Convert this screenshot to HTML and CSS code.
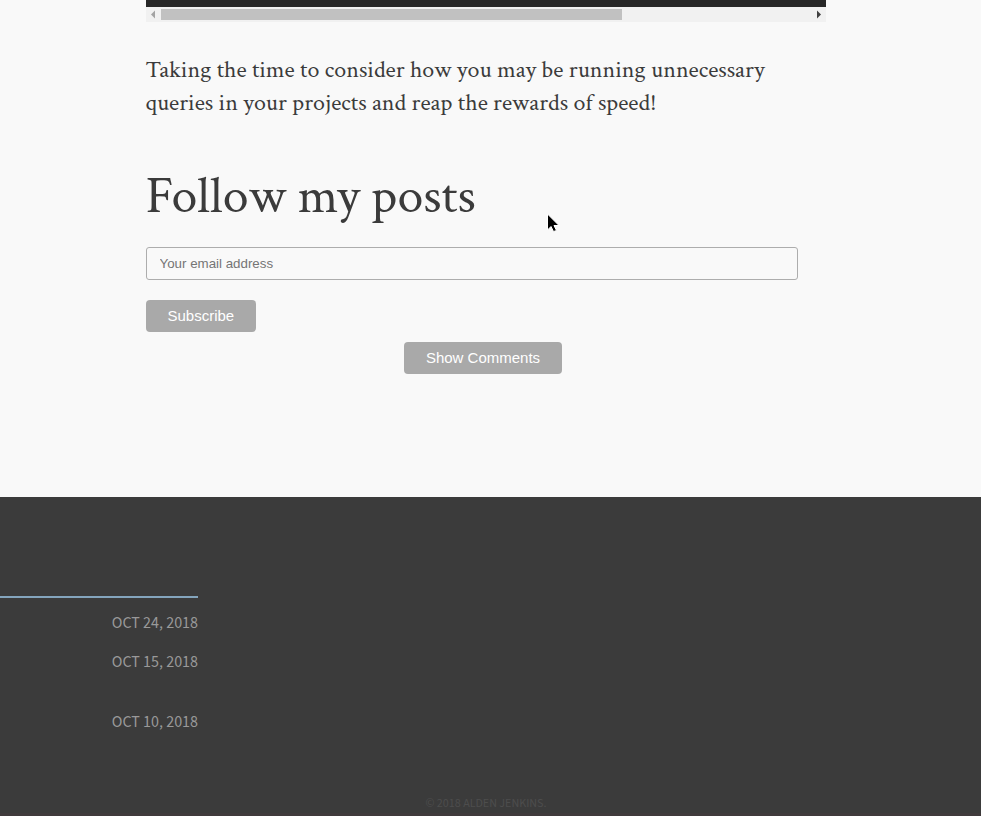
FILE: index.html
```html
<!DOCTYPE html>
<html lang="en">
<head>
<meta charset="utf-8">
<meta name="viewport" content="width=device-width, initial-scale=1">
<title>Alden Jenkins</title>
<link rel="stylesheet" href="styles.css">
</head>
<body>
<main class="post">
  <div class="column">
    <div class="code-end"></div>
    <div class="scrollbar">
      <svg class="arrow" viewBox="0 0 15 15"><path d="M9 3.500v8L5 7.500z" fill="#a3a3a3"/></svg>
      <div class="track"><div class="thumb"></div></div>
      <svg class="arrow" viewBox="0 0 15 15"><path d="M6 3.500v8l4-4z" fill="#404040"/></svg>
    </div>
    <p class="closing">Taking the time to consider how you may be running unnecessary queries in your projects and reap the rewards of speed!</p>
    <form class="follow">
      <h1 class="title"><label for="email">Follow my posts</label></h1>
      <input class="email" id="email" type="email" placeholder="Your email address">
      <button class="button" type="button">Subscribe</button>
    </form>
    <div class="comments"><button class="button" type="button">Show Comments</button></div>
  </div>
</main>
<footer class="footer">
  <ul class="dates">
    <li><time datetime="2018-10-24">OCT 24, 2018</time></li>
    <li><time datetime="2018-10-15">OCT 15, 2018</time></li>
    <li class="tall"><time datetime="2018-10-10">OCT 10, 2018</time></li>
  </ul>
  <p class="copyright">© 2018 ALDEN JENKINS.</p>
</footer>
<svg class="pointer" viewBox="0 0 14 20"><path d="M1.500 1v16l3.500-3.500 2.500 5 3-1-2.500-5h5z" fill="#000" stroke="#fff"/></svg>
</body>
</html>
```
FILE: styles.css
```css
* {
  box-sizing: border-box;
}

body {
  display: flex;
  flex-direction: column;
  min-height: 100vh;
  margin: 0;
  background: #f9f9f9;
  color: #3b3b3b;
  font-family: "Liberation Sans", sans-serif;
}

.post {
  padding: 0 10px 123px 0;
}

.column {
  max-width: 680px;
  margin: 0 auto;
}

.code-end {
  height: 7px;
  background: #272727;
}

.scrollbar {
  display: flex;
  height: 15px;
  background: #f1f1f1;
}

.arrow {
  flex: none;
  width: 15px;
  height: 15px;
}

.track {
  flex: 1;
  padding: 2px 0;
}

.thumb {
  width: 71%;
  height: 11px;
  background: #c1c1c1;
}

.closing {
  margin: 31px 0 48px;
  font: 24px/33px "Crimson Text", "EB Garamond", "Liberation Serif", serif;
}

.follow {
  display: flex;
  flex-direction: column;
  align-items: flex-start;
}

.title {
  margin: 0 0 20px;
  font: 52px/60px "Crimson Text", "EB Garamond", "Liberation Serif", serif;
}

.email {
  width: 96%;
  height: 33px;
  margin: 0 0 20px;
  padding: 0 13px;
  border: 1px solid #adadad;
  border-radius: 3px;
  background: transparent;
  font-family: "Liberation Sans", sans-serif;
}

.email::placeholder {
  color: #757575;
}

.button {
  height: 32px;
  padding: 0 22px 2px;
  border: 0;
  border-radius: 4px;
  background: #a9a9a9;
  color: #fff;
  font: 15px "Liberation Sans", sans-serif;
}

.comments {
  margin-top: 10px;
  padding-right: 5px;
  text-align: center;
}

.footer {
  flex: 1;
  padding-top: 99px;
  border-bottom: 3px solid #403a3c;
  background: #3b3b3b;
  font-family: "Source Sans 3", "Noto Sans CJK SC", sans-serif;
}

.dates {
  width: 198px;
  margin: 0;
  padding: 15px 0 0;
  border-top: 2px solid #84a5bd;
  color: #999;
  font-size: 16px;
  line-height: 20px;
  list-style: none;
  text-align: right;
}

.dates li {
  margin-bottom: 19px;
}

.dates .tall {
  margin-top: 40px;
  margin-bottom: 0;
}

.copyright {
  margin: 63px 9px 0 0;
  color: #4d4d4d;
  font-size: 12px;
  line-height: 18px;
  text-align: center;
}

.pointer {
  position: absolute;
  top: 213px;
  left: 546px;
  width: 14px;
  height: 20px;
}
```
